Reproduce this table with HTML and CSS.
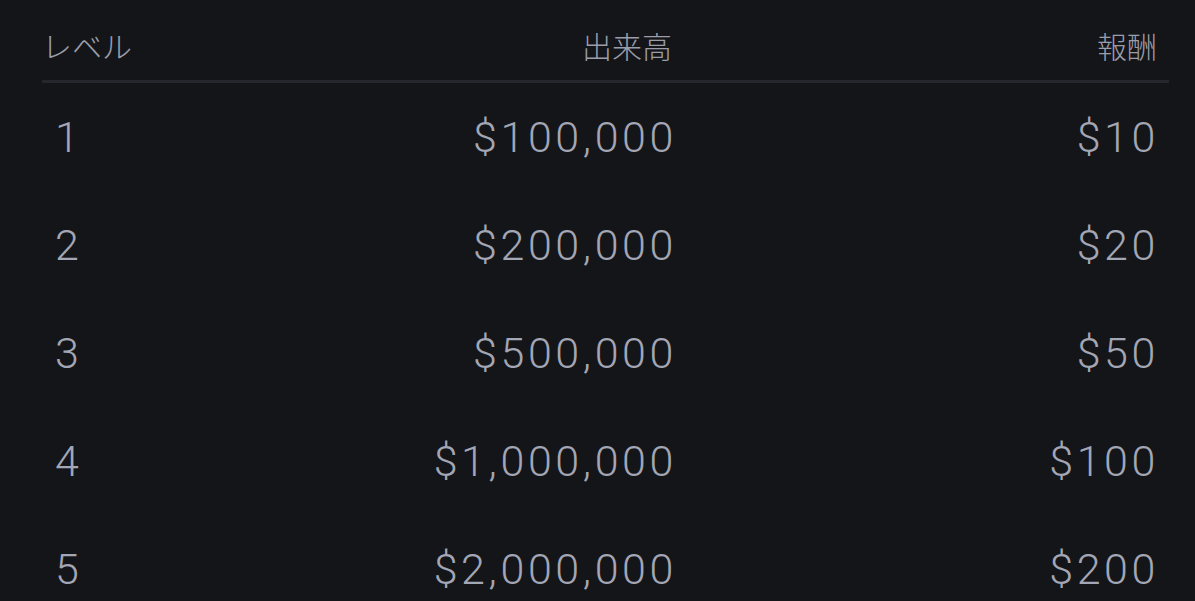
FILE: index.html
```html
<!DOCTYPE html>
<html lang="ja">
<head>
  <meta charset="UTF-8">
  <title>レベル報酬</title>
  <link rel="stylesheet" href="styles.css">
</head>
<body>
  <div class="table-pane">
    <div class="row head">
      <div class="cell level">レベル</div>
      <div class="cell volume">出来高</div>
      <div class="cell reward">報酬</div>
    </div>
    <div class="row">
      <div class="cell level">1</div>
      <div class="cell volume">$100,000</div>
      <div class="cell reward">$10</div>
    </div>
    <div class="row">
      <div class="cell level">2</div>
      <div class="cell volume">$200,000</div>
      <div class="cell reward">$20</div>
    </div>
    <div class="row">
      <div class="cell level">3</div>
      <div class="cell volume">$500,000</div>
      <div class="cell reward">$50</div>
    </div>
    <div class="row">
      <div class="cell level">4</div>
      <div class="cell volume">$1,000,000</div>
      <div class="cell reward">$100</div>
    </div>
    <div class="row">
      <div class="cell level">5</div>
      <div class="cell volume">$2,000,000</div>
      <div class="cell reward">$200</div>
    </div>
  </div>
</body>
</html>
```

FILE: styles.css
```css
body {
  margin: 0;
  background-color: #141519;
  font-family: Roboto, "Noto Sans CJK JP", sans-serif;
  color: #a3a6b4;
  height: 601px;
  overflow: hidden;
}

.table-pane {
  padding: 0 26px 0 42px;
}

.row {
  display: grid;
  grid-template-columns: 315px 320px 1fr;
  align-items: center;
  height: 108px;
  font-size: 43px;
  font-weight: 300;
  letter-spacing: 3.6px;
}

.row.head {
  height: 80px;
  border-bottom: 3px solid #25272c;
  font-family: "Noto Sans CJK JP", sans-serif;
  font-size: 30px;
  font-weight: 300;
  letter-spacing: 0;
  color: #9b9ea9;
  align-items: start;
}

.row.head .cell {
  padding-top: 25px;
  line-height: 40px;
}

.cell.level {
  padding-left: 13px;
}

.head .cell.level {
  padding-left: 0;
}

.cell.volume {
  text-align: right;
}

.head .cell.volume {
  padding-right: 5px;
}

.cell.reward {
  text-align: right;
  padding-right: 10px;
}

.head .cell.reward {
  padding-right: 12px;
}
```
